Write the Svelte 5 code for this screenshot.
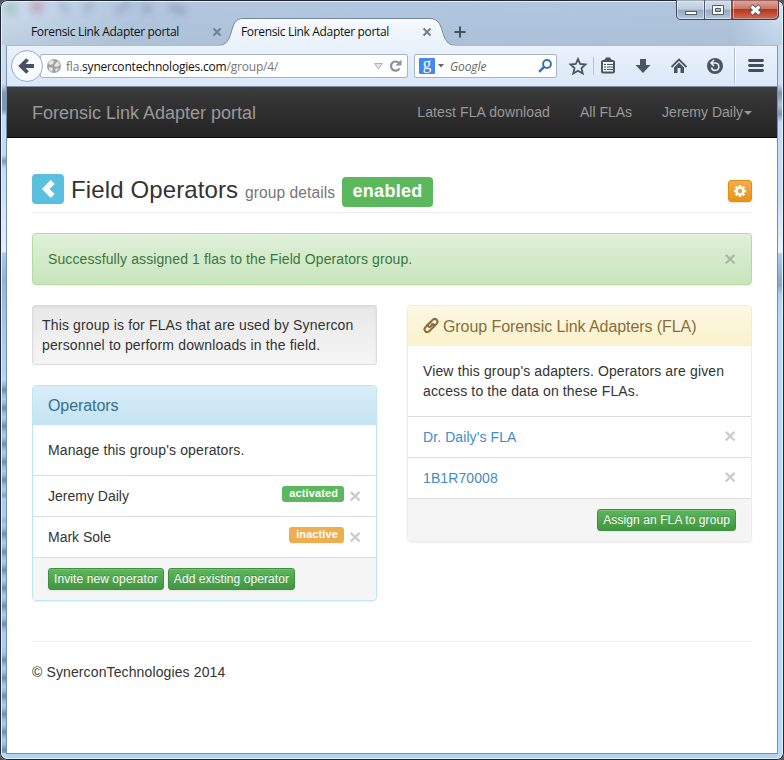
<script>
  const operators = [
    { name: 'Jeremy Daily', status: 'activated', tone: 'green' },
    { name: 'Mark Sole', status: 'inactive', tone: 'orange' }
  ];
  const adapters = ["Dr. Daily's FLA", '1B1R70008'];
</script>

<div class="desktop">
<div class="window">
  <header class="tabs">
    <svg class="strip" width="784" height="46" viewBox="0 0 784 46" aria-hidden="true">
      <defs>
        <linearGradient id="tab" x1="0" y1="0" x2="0" y2="1"><stop offset="0" stop-color="#f7fafd" /><stop offset="1" stop-color="#e9f1fb" /></linearGradient>
        <filter id="soft" x="-60%" y="-60%" width="220%" height="220%"><feGaussianBlur stdDeviation="3.500" /></filter>
      </defs>
      <g filter="url(#soft)" opacity=".38">
        <circle cx="11" cy="9" r="7" fill="#75ad8c" /><circle cx="37" cy="7" r="7" fill="#b9708a" />
        <path d="M60 2l8 11M84 12l8-9M116 13l14-11" stroke="#6680a0" stroke-width="5" /><path d="M147 4v9M170 7l16 5" stroke="#62748c" stroke-width="7" />
      </g>
      <path d="M6.500 46V45.500H218C236 45.500 227 18.500 243 18.500H430C447 18.500 438 45.500 456 45.500H777.500V46" fill="url(#tab)" stroke="#7288a2" />
      <path d="M7 46h770" stroke="#eaf2fb" />
      <g stroke="#70808f" stroke-width="2"><path d="M213.500 28.500l7 7m0-7l-7 7M423.500 28.500l7 7m0-7l-7 7" /></g>
      <path d="M454.500 32h11M460 26.500v11" stroke="#43505d" stroke-width="2" />
    </svg>
    <span class="tab first">Forensic Link Adapter portal</span>
    <span class="tab">Forensic Link Adapter portal</span>
    <svg class="controls" width="104" height="21" viewBox="0 0 104 21" aria-hidden="true">
      <defs>
        <linearGradient id="glass" x1="0" y1="0" x2="0" y2="1"><stop offset="0" stop-color="#d3dfec" /><stop offset=".48" stop-color="#bdcddd" /><stop offset=".5" stop-color="#94a9bf" /><stop offset="1" stop-color="#b4c9dd" /></linearGradient>
        <linearGradient id="red" x1="0" y1="0" x2="0" y2="1"><stop offset="0" stop-color="#dfa99f" /><stop offset=".45" stop-color="#cb7768" /><stop offset=".5" stop-color="#b83420" /><stop offset="1" stop-color="#d46b50" /></linearGradient>
      </defs>
      <path d="M.5 0V15Q.5 19.500 5 19.500H98Q102.500 19.500 102.500 15V0Z" fill="url(#glass)" stroke="#404c5e" />
      <path d="M56 0H102V15Q102 19 98 19H56Z" fill="url(#red)" stroke="#5c2228" />
      <path d="M1.500 1V15Q1.500 18.500 5 18.500H27.500V1ZM29.500 1h25v17.500h-25zM57.500 1v17.500H98Q101.500 18 101.500 15V1" fill="none" stroke="#fff" stroke-opacity=".45" />
      <path d="M28.500 0v19M55.500 0v19" stroke="#4d5a6b" />
      <rect x="9.500" y="11.500" width="11" height="3" fill="#fff" stroke="#535b6b" />
      <path d="M36.500 5.500h11v9h-11zM39.500 8.500v3h5v-3z" fill="#fff" fill-rule="evenodd" stroke="#535b6b" />
      <path d="M75 6l9 8m0-8l-9 8" stroke="#535666" stroke-width="5" /><path d="M75.500 6.500l8 7m0-7l-8 7" stroke="#fff" stroke-width="3" />
    </svg>
  </header>

  <div class="toolbar">
    <svg class="back" width="34" height="34" viewBox="0 0 34 34" aria-hidden="true"><circle cx="17" cy="17" r="15.500" fill="#f7faff" stroke="#9cabba" /><path d="M24 17H12M17.500 10.500L11 17l6.500 6.500" fill="none" stroke="#46525f" stroke-width="3.800" /></svg>
    <div class="url">
      <svg width="16" height="16" viewBox="0 0 16 16" aria-hidden="true"><circle cx="8" cy="8" r="7" fill="#a2a2a2" /><path d="M2 5l3-3 3 1-1 3-3 1zM9 6l3-3 2 4-3 2-3-1zM3 9l4 1-1 4-3-2zM9 11l4-1-3 4z" fill="#e5e5e5" /></svg>
      <span class="address">fla.<b>synercontechnologies.com</b>/group/4/</span>
      <svg class="reload" width="30" height="16" viewBox="0 0 30 16" aria-hidden="true"><path d="M1.500 5.500h8L5.500 11z" fill="#dfe5ea" stroke="#a9b4be" /><path d="M26.500 10.500A4.600 4.600 0 1 1 26 5" fill="none" stroke="#84919e" stroke-width="2.200" /><path d="M28.500 1.500v6h-6z" fill="#84919e" /></svg>
    </div>
    <div class="search">
      <span class="google">g</span>
      <svg width="7" height="4" viewBox="0 0 7 4" aria-hidden="true"><path d="M0 0h6L3 3.500z" fill="#666" /></svg>
      <em>Google</em>
      <svg class="lens" width="14" height="14" viewBox="0 0 14 14" aria-hidden="true"><circle cx="9" cy="5" r="3.900" fill="none" stroke="#3472b0" stroke-width="2" /><path d="M6.300 7.700L1.200 12.800" stroke="#3472b0" stroke-width="2.500" /></svg>
    </div>
    <svg class="tools" width="200" height="40" viewBox="0 0 200 40" aria-hidden="true">
      <g fill="none" stroke="#4a5560">
        <path d="M13 13l2.200 5 5.300.5-4 3.600 1.200 5.400-4.700-2.800-4.700 2.800 1.200-5.400-4-3.600 5.300-.5z" stroke-width="1.800" />
        <path d="M28.500 11v18" stroke="#b5c3d2" />
        <rect x="37" y="15" width="12" height="11.500" rx="1" stroke-width="2" fill="#edf3fa" /><path d="M39 18.500h2m1 0h6M39 21h2m1 0h6M39 23.500h2m1 0h6" stroke-width="1.200" /><path d="M39 14.500h8l-2-3h-4z" fill="#4a5560" stroke="none" />
        <path d="M75 13h6v6h4.500L78 27l-7.500-8H75z" fill="#4a5560" stroke="none" />
        <path d="M106.500 21l7.500-7.500 7.500 7.500" stroke-width="1.800" /><path d="M109 21.500l5-5 5 5V27h-3.500v-5h-3v5H109z" fill="#4a5560" stroke="none" />
      </g>
      <circle cx="150" cy="20" r="8" fill="#4a5560" /><path d="M146 17h4.500a3.700 3.700 0 1 1-4 4.500M149 14l-3 3 3 3" fill="none" stroke="#eef4fb" stroke-width="1.500" />
      <path d="M169.500 2v36" stroke="#b0becc" /><path d="M170.500 2v36" stroke="#fff" />
      <path d="M184.500 14.500h13M184.500 19.500h13M184.500 24.500h13" stroke="#414d59" stroke-width="2.800" stroke-linecap="round" />
    </svg>
  </div>

  <main>
    <nav><span class="brand">Forensic Link Adapter portal</span><span class="wide">Latest FLA download</span><span>All FLAs</span><span>Jeremy Daily<i></i></span></nav>
    <div class="page">
      <div class="title">
        <button class="prev" aria-label="Back"><svg width="32" height="30" viewBox="0 0 32 30"><path d="M18.700 6l4 4-5.200 5 5.200 5-4 4L10 15z" fill="#fff" /></svg></button>
        <h3>Field Operators <small>group details</small></h3>
        <span class="enabled">enabled</span>
        <button class="gear" aria-label="Settings"><svg width="14" height="14" viewBox="0 0 14 14"><g fill="none" stroke="#fff"><circle cx="7" cy="7" r="3.400" stroke-width="2.400" /><path d="M7 1v2M7 11v2M1 7h2M11 7h2M2.700 2.700l1.400 1.400M9.900 9.900l1.400 1.400M11.300 2.700L9.900 4.100M4.100 9.900l-1.400 1.400" stroke-width="2.400" /></g></svg></button>
      </div>

      <div class="alert"><span>Successfully assigned 1 flas to the Field Operators group.</span><button class="close">×</button></div>

      <div class="columns">
        <section>
          <div class="well">This group is for FLAs that are used by Synercon personnel to perform downloads in the field.</div>
          <div class="panel info">
            <h4>Operators</h4>
            <p>Manage this group's operators.</p>
            {#each operators as op}
              <div class="row"><span>{op.name}</span><span class="label {op.tone}">{op.status}</span><button class="close">×</button></div>
            {/each}
            <footer><button class="btn">Invite new operator</button><button class="btn">Add existing operator</button></footer>
          </div>
        </section>
        <section>
          <div class="panel warning">
            <h4><svg width="16" height="17" viewBox="0 0 16 17" aria-hidden="true"><g fill="none" stroke="#8a6d3b" stroke-width="2.100" stroke-linecap="round"><path d="M11.300 9.200L13.700 6.600C16 3.900 12.500.5 9.800 2.800L5.500 7C4 8.800 5.200 10.200 7.200 9.800L9.500 7.700" /><path d="M4.700 7.800L2.300 10.400C0 13.100 3.500 16.500 6.200 14.200L10.500 10C12 8.200 10.800 6.800 8.800 7.200" /></g></svg>Group Forensic Link Adapters (FLA)</h4>
            <p>View this group's adapters. Operators are given access to the data on these FLAs.</p>
            {#each adapters as adapter}
              <div class="row"><a href="#fla">{adapter}</a><button class="close">×</button></div>
            {/each}
            <footer class="end"><button class="btn">Assign an FLA to group</button></footer>
          </div>
        </section>
      </div>
      <div class="copyright">© SynerconTechnologies 2014</div>
    </div>
  </main>
</div>
</div>

<style>
  * { box-sizing: border-box; }
  button { font: inherit; margin: 0; padding: 0; border: 0; background: none; }
  svg { display: block; flex: none; }
  .desktop { background: #555; width: 784px; height: 760px; }
  .window {
    width: 784px; height: 760px; padding: 0 6px; border-radius: 7px; overflow: hidden; position: relative;
    display: flex; flex-direction: column;
    box-shadow: inset 0 0 0 1px #202833, inset 0 0 0 2px #e5f1fc;
    background:
      linear-gradient(transparent 12px, #a5b9cb66 44px) 0 0 / 784px 45px no-repeat,
      linear-gradient(90deg, #ccdcec, #b2c6de 130px, #afc5e0 550px, #b0c5dc 730px, #cde0f4 775px) 0 0 / 784px 45px no-repeat,
      linear-gradient(#a9ccf200, #a9ccf2 4px, #a9ccf2 22px, #a9ccf200) 0 495px / 7px 27px no-repeat,
      linear-gradient(#a9ccf200, #a9ccf2 3px, #a9ccf2 16px, #a9ccf200) 0 631px / 7px 20px no-repeat,
      repeating-linear-gradient(#a9ccf2 0, #9ab8db 4px, #718ba8 9px, #9ab8db 14px, #a9ccf2 18px) 0 381px / 7px 372px no-repeat,
      linear-gradient(#c9dcf3 84px, #8297b0 93px, #8297b0 110px, #c5dcf8 116px, #c2dafa 155px, #8197ae 161px, #c2dafa 168px, #e6effb 252px, #a9c9ee 253px, #92b4da 280px, #a5c8ed 330px, #b2d6fc 380px) 0 0 / 7px 760px no-repeat,
      linear-gradient(#c9dff6 84px, #7d92ab 93px, #aec3da 105px, #7d92ab 114px, #c2dafa 122px, #cadff9 200px, #edf4fd 252px, #a9cdf3 254px, #8ba6c3 285px, #b0d2f5 295px, #b8dafc 320px) 777px 0 / 7px 760px no-repeat,
      #b1d3f6;
  }
  .tabs { height: 46px; flex: none; position: relative; display: flex; padding: 18px 0 0 25px; font: 12px/28px "Open Sans", "Noto Sans", sans-serif; color: #111; letter-spacing: -.34px; }
  .strip { position: absolute; left: -6px; top: 0; }
  .tab { position: relative; width: 210px; white-space: nowrap; }
  .controls { position: absolute; left: 670px; top: 0; }
  .toolbar { height: 41px; flex: none; display: flex; align-items: center; padding-left: 4px; background: linear-gradient(#eaf2fb, #dae8f8); border: solid #7f94ab; border-width: 0 1px 1px; font: 12px/22px "Open Sans", "Noto Sans", sans-serif; }
  .back { position: relative; z-index: 1; margin-left: -1px; }
  .url { width: 368px; height: 24px; margin-left: -4px; border: 1px solid #a6b4c4; border-radius: 2px; background: #fff; display: flex; align-items: center; padding: 0 4px 0 5px; }
  .address { color: #777; margin-left: 4px; letter-spacing: -.2px; white-space: nowrap; position: relative; top: 1px; }
  .address b { color: #111; font-weight: 400; }
  .reload { margin-left: auto; }
  .search { width: 143px; height: 24px; margin-left: 6px; border: 1px solid #a6b4c4; border-radius: 2px; background: #fff; display: flex; align-items: center; padding: 0 4px 0 4px; color: #666; letter-spacing: -.1px; }
  .google { background: #4587f0; color: #fff; width: 16px; height: 16px; margin-right: 3px; font: 17px/11px "Liberation Serif", serif; text-align: center; border-radius: 1px; }
  .search em { margin-left: 5px; position: relative; top: 1px; }
  .lens { margin-left: auto; }
  .tools { margin-left: 8px; }
  main { flex: none; height: 667px; border: 1px solid #7290b0; border-top: 0; background: #fff; color: #333; font: 14px/20px "Liberation Sans", Arial, sans-serif; margin-bottom: 7px; }
  nav { height: 51px; background: linear-gradient(#3c3c3c, #222); border-bottom: 1px solid #080808; display: flex; gap: 30px; padding: 15px 25px 0; color: #999; }
  .brand { font-size: 18px; line-height: 22px; margin-right: auto; }
  .wide { letter-spacing: .1px; }
  nav i { display: inline-block; margin-left: 1px; border: 4px solid transparent; border-top-color: #999; border-bottom: 0; vertical-align: middle; }
  .page { padding: 36px 25px 0; }
  .title { display: flex; height: 39px; border-bottom: 1px solid #eee; }
  .prev { width: 32px; height: 30px; border-radius: 4px; background: #5bc0de; }
  h3 { font-size: 24px; line-height: 30px; font-weight: 400; margin: 1px 7px 0; white-space: nowrap; letter-spacing: .12px; }
  small { color: #777; font-size: 15.6px; letter-spacing: .06px; }
  .enabled { width: 91px; height: 30px; margin-top: 3px; border-radius: 4px; background: #5cb85c; color: #fff; font: bold 18px/29px "Liberation Sans", Arial, sans-serif; letter-spacing: .3px; text-align: center; }
  .gear { width: 24px; height: 22px; margin: 6px 0 0 auto; display: grid; place-items: center; border: 1px solid #e38d13; border-radius: 3px; background: linear-gradient(#f0ad4e, #eb9316); box-shadow: 0 1px 2px #0002; }
  .alert { margin-top: 20px; height: 52px; border: 1px solid #b2dba1; border-radius: 4px; background: linear-gradient(#dff0d8, #c8e5bc); color: #3c763d; display: flex; justify-content: space-between; align-items: center; padding: 0 15px; letter-spacing: .11px; box-shadow: inset 0 1px 0 #fff4, 0 1px 2px #0000000d; }
  .close { width: 12px; font: bold 21px/20px "Liberation Sans", Arial, sans-serif; letter-spacing: 0; color: #000; opacity: .2; text-shadow: 0 1px #fff; }
  .columns { display: flex; gap: 30px; margin-top: 20px; align-items: flex-start; height: 336px; }
  section { width: 345px; }
  .well { height: 60px; padding: 9px; border: 1px solid #dcdcdc; border-radius: 3px; background: linear-gradient(#e8e8e8, #f5f5f5); box-shadow: inset 0 1px 3px #0001; margin-bottom: 20px; letter-spacing: .15px; }
  .panel { border: 1px solid; border-radius: 4px; overflow: hidden; box-shadow: 0 1px 2px #0001; }
  .info { border-color: #bce8f1; }
  .warning { border-color: #faebcc; }
  h4 { height: 39px; margin: 0; padding: 0 15px; display: flex; align-items: center; gap: 4px; font-size: 16px; font-weight: 400; letter-spacing: -.08px; color: #31708f; background: linear-gradient(#d9edf7, #c4e3f3); }
  .warning h4 { height: 40px; padding-top: 1px; color: #8a6d3b; background: linear-gradient(#fcf8e3, #faf2cc); }
  .warning h4 svg { margin-top: -2px; }
  p { margin: 0; padding: 15px; letter-spacing: .13px; }
  .row { height: 41px; border-top: 1px solid #ddd; display: flex; align-items: center; padding: 0 15px; }
  .row span:first-child, .row a { margin-right: auto; }
  .row a { color: #428bca; text-decoration: none; letter-spacing: .09px; }
  .warning .close { margin-top: -3px; }
  .label { height: 16px; padding: 0 6px 0 7px; margin: -4px 5px 0 0; border-radius: 3px; color: #fff; font: bold 11px/15px "Liberation Sans", Arial, sans-serif; letter-spacing: .11px; }
  .green { background: #5cb85c; }
  .orange { background: #f0ad4e; }
  footer { height: 43px; background: #f5f5f5; border-top: 1px solid #ddd; display: flex; gap: 4px; padding: 10px 15px; }
  .end { justify-content: flex-end; }
  .btn { height: 22px; padding: 0 5px; border: 1px solid #3e8f3e; border-radius: 3px; background: linear-gradient(#5cb85c, #419641); color: #fff; font-size: 12px; line-height: 20px; letter-spacing: .09px; text-shadow: 0 -1px #0003; box-shadow: inset 0 1px #fff2, 0 1px 2px #0001; white-space: nowrap; }
  .copyright { border-top: 1px solid #eee; padding-top: 20px; letter-spacing: .12px; }
</style>
